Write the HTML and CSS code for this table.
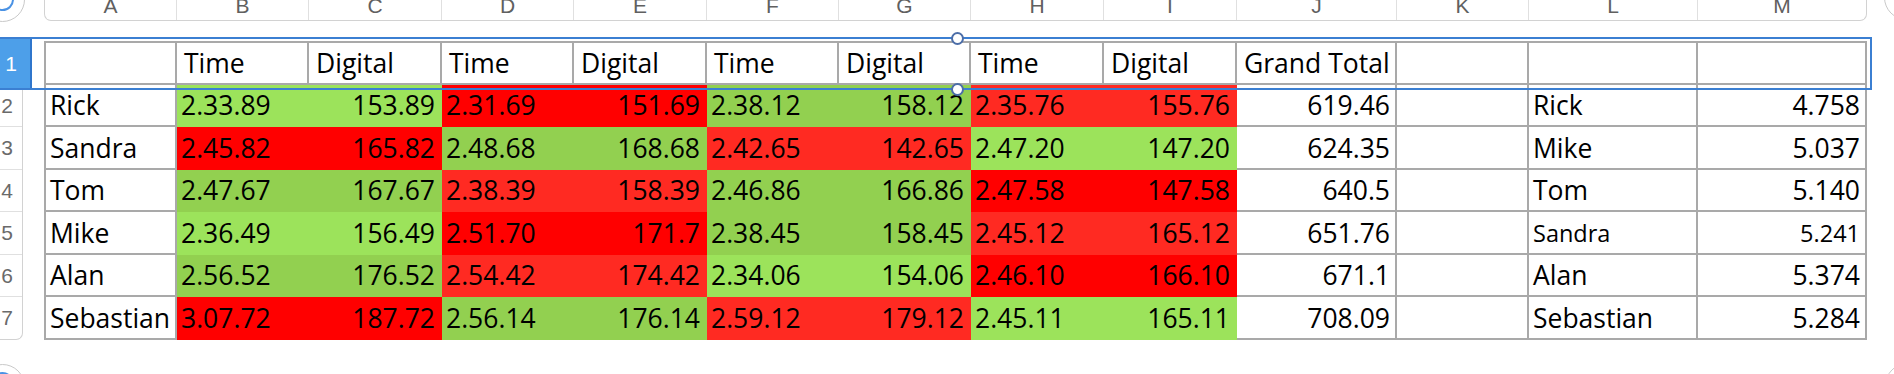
FILE: index.html
```html
<!DOCTYPE html>
<html>
<head>
<meta charset="utf-8">
<link rel="stylesheet" href="styles.css">
</head>
<body>
<div class="sheet">
  <div class="topbar">
    <div class="lead"></div>
    <div class="colbar">
      <span>A</span><span>B</span><span>C</span><span>D</span><span>E</span><span>F</span><span>G</span><span>H</span><span>I</span><span>J</span><span>K</span><span>L</span><span class="last">M</span>
    </div>
  </div>
  <div class="body">
    <div class="rowheads">
      <div class="rh r1"></div>
      <div class="rh r2">2</div>
      <div class="rh r3">3</div>
      <div class="rh r4">4</div>
      <div class="rh r5">5</div>
      <div class="rh r6">6</div>
      <div class="rh r7">7</div>
    </div>
    <div class="table">
      <div class="c"></div><div class="c h">Time</div><div class="c h">Digital</div><div class="c h">Time</div><div class="c h">Digital</div><div class="c h">Time</div><div class="c h">Digital</div><div class="c h">Time</div><div class="c h">Digital</div><div class="c h">Grand Total</div><div class="c"></div><div class="c"></div><div class="c"></div>

      <div class="c">Rick</div><div class="c lg">2.33.89</div><div class="c lg n">153.89</div><div class="c rd">2.31.69</div><div class="c rd n">151.69</div><div class="c dg">2.38.12</div><div class="c dg n">158.12</div><div class="c rl">2.35.76</div><div class="c rl n">155.76</div><div class="c n">619.46</div><div class="c"></div><div class="c">Rick</div><div class="c n">4.758</div>

      <div class="c">Sandra</div><div class="c rd">2.45.82</div><div class="c rd n">165.82</div><div class="c dg">2.48.68</div><div class="c dg n">168.68</div><div class="c rl">2.42.65</div><div class="c rl n">142.65</div><div class="c lg">2.47.20</div><div class="c lg n">147.20</div><div class="c n">624.35</div><div class="c"></div><div class="c">Mike</div><div class="c n">5.037</div>

      <div class="c">Tom</div><div class="c dg">2.47.67</div><div class="c dg n">167.67</div><div class="c rl">2.38.39</div><div class="c rl n">158.39</div><div class="c dg">2.46.86</div><div class="c dg n">166.86</div><div class="c rd">2.47.58</div><div class="c rd n">147.58</div><div class="c n">640.5</div><div class="c"></div><div class="c">Tom</div><div class="c n">5.140</div>

      <div class="c">Mike</div><div class="c lg">2.36.49</div><div class="c lg n">156.49</div><div class="c rd">2.51.70</div><div class="c rd n">171.7</div><div class="c dg">2.38.45</div><div class="c dg n">158.45</div><div class="c rl">2.45.12</div><div class="c rl n">165.12</div><div class="c n">651.76</div><div class="c"></div><div class="c small">Sandra</div><div class="c n small">5.241</div>

      <div class="c">Alan</div><div class="c dg">2.56.52</div><div class="c dg n">176.52</div><div class="c rl">2.54.42</div><div class="c rl n">174.42</div><div class="c lg">2.34.06</div><div class="c lg n">154.06</div><div class="c rd">2.46.10</div><div class="c rd n">166.10</div><div class="c n">671.1</div><div class="c"></div><div class="c">Alan</div><div class="c n">5.374</div>

      <div class="c">Sebastian</div><div class="c rd">3.07.72</div><div class="c rd n">187.72</div><div class="c dg">2.56.14</div><div class="c dg n">176.14</div><div class="c rl">2.59.12</div><div class="c rl n">179.12</div><div class="c lg">2.45.11</div><div class="c lg n">165.11</div><div class="c n">708.09</div><div class="c"></div><div class="c">Sebastian</div><div class="c n">5.284</div>
    </div>
  </div>

  <div class="selection"><div class="selhead">1</div></div>
  <div class="handle handle-top"></div>
  <div class="handle handle-bottom"></div>

  <div class="knob knob-tl"><div class="knob-inner"></div></div>
  <div class="knob knob-bl"><div class="knob-inner"></div></div>
  <div class="knob knob-tr"></div>
  <div class="knob knob-br"></div>
</div>
</body>
</html>
```

FILE: styles.css
```css
html, body {
  margin: 0;
  padding: 0;
  background: #ffffff;
}

.sheet {
  position: relative;
  width: 1894px;
  height: 374px;
  overflow: hidden;
  font-family: "Open Sans", "Liberation Sans", sans-serif;
  color: #000;
}

/* column letters bar */
.topbar {
  display: flex;
  height: 21px;
}

.topbar .lead {
  width: 44px;
  flex: none;
}

.colbar {
  display: grid;
  grid-template-columns: 132px 132px 133px 132px 133px 132px 132px 133px 133px 160px 132px 169px 168px;
  width: 1823px;
  height: 21px;
  box-sizing: border-box;
  border: 1px solid #d2d2d2;
  border-top: none;
  border-radius: 0 0 7px 7px;
}

.colbar span {
  display: block;
  border-right: 1px solid #e0e0e0;
  font-family: "Liberation Sans", Arial, sans-serif;
  font-size: 21px;
  line-height: 11px;
  color: #606060;
  text-align: center;
  height: 20px;
}

.colbar span.last {
  border-right: none;
}

/* body: row headers + table */
.body {
  display: flex;
  gap: 21px;
  margin-top: 20px;
}

.rowheads {
  margin-left: -8px;
  width: 31px;
  flex: none;
  display: grid;
  grid-template-rows: 44px 42px 43px 42px 43px 42px 42px;
  box-sizing: border-box;
  border-right: 1px solid #d2d2d2;
  border-bottom: 1px solid #d2d2d2;
  border-radius: 0 0 7px 0;
}

.rh {
  display: flex;
  align-items: center;
  justify-content: center;
  font-family: "Liberation Sans", Arial, sans-serif;
  font-size: 21px;
  color: #6a6a6a;
  border-bottom: 1px solid #e0e0e0;
  box-sizing: border-box;
}

.rh.r7 {
  border-bottom: none;
}

.table {
  display: grid;
  grid-template-columns: 131px 132px 133px 132px 133px 132px 132px 133px 133px 160px 132px 169px 169px;
  grid-template-rows: 42px 42px 43px 42px 43px 42px 43px;
  border-left: 2px solid #a9a9a9;
  border-top: 2px solid #a9a9a9;
  flex: none;
}

.c {
  box-sizing: border-box;
  border-right: 2px solid #a9a9a9;
  border-bottom: 2px solid #a9a9a9;
  display: flex;
  align-items: center;
  padding: 0 5px 0 4px;
  font-size: 26.5px;
  line-height: 30px;
  white-space: nowrap;
  overflow: hidden;
}

.c.h {
  padding-left: 7px;
}

.c.n {
  justify-content: flex-end;
}

.c.small {
  font-size: 23.5px;
}

.c.lg { background: #9ce35b; border-color: transparent; }
.c.dg { background: #92d050; border-color: transparent; }
.c.rd { background: #ff0000; border-color: transparent; }
.c.rl { background: #ff2a22; border-color: transparent; }

/* selection overlay */
.selection {
  position: absolute;
  left: 0;
  top: 37px;
  width: 1872px;
  height: 53px;
  box-sizing: border-box;
  border: 2px solid #3b7fd2;
  border-left: none;
}

.selhead {
  width: 22px;
  height: 49px;
  background: #4d9fe9;
  border-right: 2px solid #2f76cc;
  display: flex;
  align-items: center;
  justify-content: center;
  font-family: "Liberation Sans", Arial, sans-serif;
  font-size: 21px;
  color: #ffffff;
  padding-right: 8px;
  box-sizing: content-box;
  margin-left: -8px;
  padding-left: 8px;
}

.handle {
  position: absolute;
  left: 951px;
  width: 9px;
  height: 9px;
  border: 2px solid #4c6ea8;
  background: #ffffff;
  border-radius: 50%;
}

.handle-top { top: 32px; }
.handle-bottom { top: 83px; }

/* corner knobs */
.knob {
  position: absolute;
  width: 45px;
  height: 45px;
  box-sizing: border-box;
  border: 1px solid #c9c9c9;
  border-radius: 50%;
  background: #ffffff;
}

.knob-inner {
  position: absolute;
  left: 10px;
  top: 10px;
  width: 23px;
  height: 23px;
  box-sizing: border-box;
  border: 2px solid #4a92e4;
  border-radius: 50%;
}

.knob-tl { left: -20px; top: -23px; }
.knob-bl { left: -20px; top: 364px; }
.knob-bl .knob-inner { top: 7px; }
.knob-tr { left: 1884px; top: -25px; }
.knob-br { left: 1885px; top: 363px; }
```
